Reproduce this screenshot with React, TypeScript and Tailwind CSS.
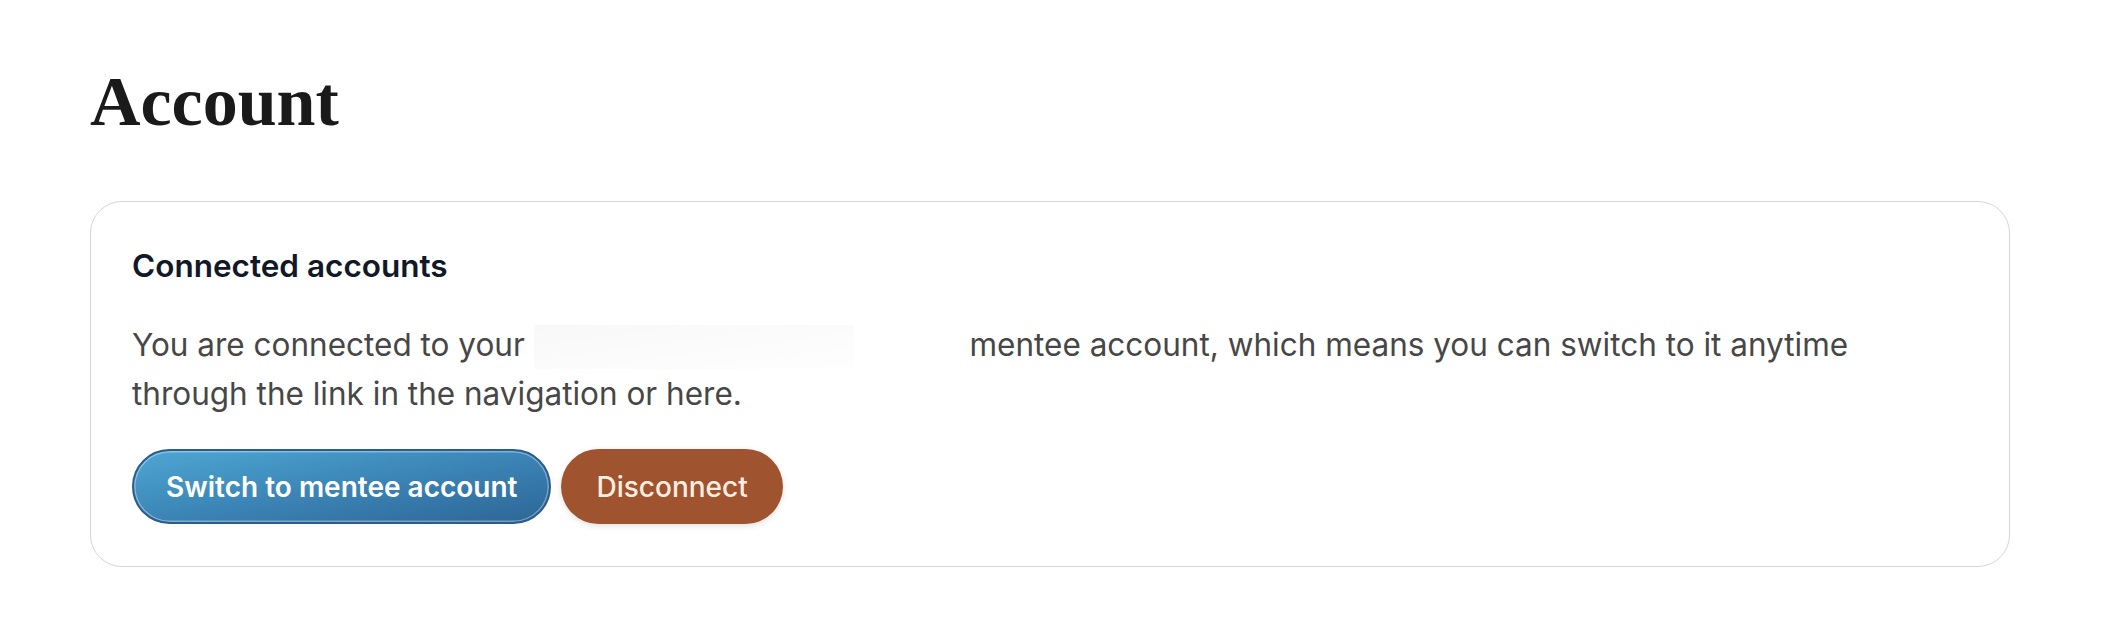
export default function App() {
  return (
    <div className="min-h-screen bg-white pl-[90px] pt-[67px] font-['Inter',sans-serif]">
      <h1 className="font-['Liberation_Serif',serif] text-[70px] font-bold leading-[70px] text-[#1a1a1a]">
        Account
      </h1>

      <section className="mt-[64px] w-[1920px] rounded-[32px] border border-[#d4d6dc] px-[41px] pt-[39px] pb-[42px]">
        <h2 className="text-[31.5px] font-semibold leading-[49px] text-[#111827]">
          Connected accounts
        </h2>
        <p className="mt-[30px] max-w-[1770px] text-[31.5px] leading-[49px] text-[#474747]">
          You are connected to your{" "}
          <span className="inline-block h-[44px] w-[427px] align-middle">
            <span className="block h-[44px] w-[320px] bg-gradient-to-br from-[#f8f8f8] via-[#fbfbfb] to-[#fefefe]" />
          </span>{" "}
          mentee account, which means you can switch to it anytime through the
          link in the navigation or here.
        </p>

        <div className="mt-[31px] flex gap-[10px]">
          <button className="h-[75px] rounded-full border-2 border-[#2a5d8d] bg-gradient-to-br from-[#4ea7d3] via-[#3b85b6] to-[#2d6696] px-[32px] text-[28px] font-semibold text-white shadow-[inset_0_0_0_1.5px_rgba(255,255,255,0.35)]">
            Switch to mentee account
          </button>
          <button className="h-[75px] rounded-full bg-[#a0532f] px-[35px] text-[28px] font-medium text-[#fbeee0] shadow-[0_2px_6px_rgba(0,0,0,0.12)]">
            Disconnect
          </button>
        </div>
      </section>
    </div>
  );
}
